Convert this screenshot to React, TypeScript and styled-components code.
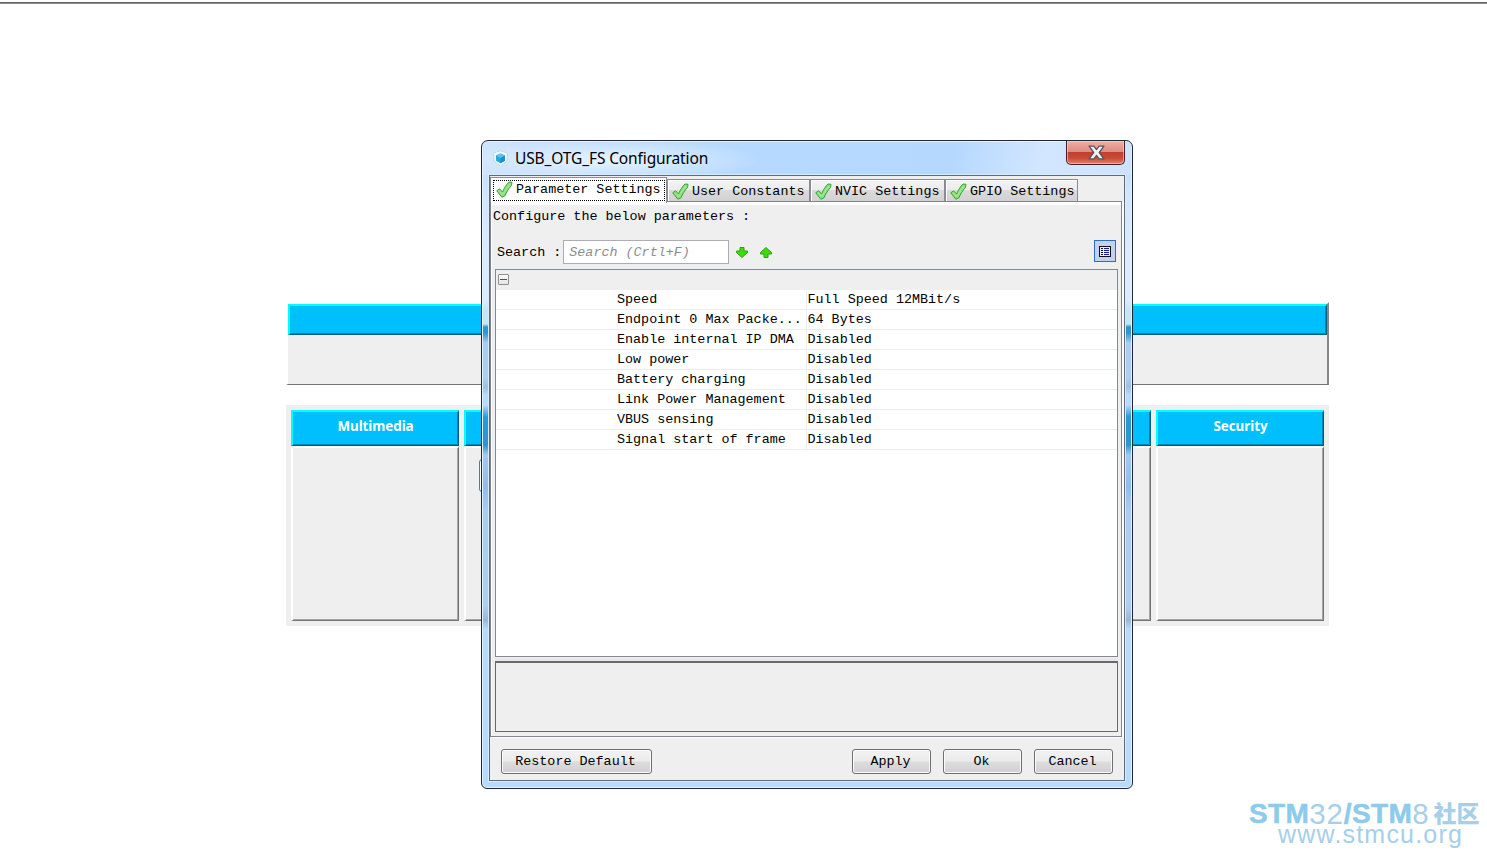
import React from "react";
import styled, { createGlobalStyle, css } from "styled-components";

const Global = createGlobalStyle`
  * { box-sizing: border-box; }
  html, body { margin: 0; padding: 0; background: #fff; }
  body { overflow: hidden; }
`;

const mono = css`
  font-family: "Liberation Mono", monospace;
  font-size: 13.4px;
  line-height: 20px;
  white-space: pre;
  color: #000;
`;

const Desktop = styled.div`
  position: relative;
  width: 1487px;
  height: 859px;
  padding-top: 2px;
  overflow: hidden;
  background: #fff;
`;

const TopRule = styled.div`
  height: 2px;
  background: #8b8b90;
  border-top: 1px solid #606066;
`;

const Middleware = styled.section`
  width: 1043px;
  height: 83px;
  margin: 298px 0 0 286px;
  border: solid;
  border-width: 2px 2px 1px 2px;
  border-color: #fff #858585 #747474 #fff;
  background: #efefef;
`;

const BlueBar = styled.div<{ $h: number }>`
  height: ${(p) => p.$h}px;
  background: #00bfff;
  border: solid;
  border-width: 2px 1px 1px 2px;
  border-color: #00ffff #005a7a #005a7a #00ffff;
  box-shadow: inset -1px -1px #0086b3;
  color: #fff;
  font: bold 13.4px/28px "Noto Sans", "Open Sans", sans-serif;
  letter-spacing: -0.05px;
  text-align: center;
`;

const Groups = styled.section`
  display: flex;
  gap: 5px;
  width: 1043px;
  height: 221px;
  margin: 20px 0 0 286px;
  padding: 5px;
  background: #efefef;
`;

const Group = styled.div`
  width: 168px;
`;

const GroupBody = styled.div`
  height: 175px;
  padding: 11px 0 0 13px;
  border: solid;
  border-width: 2px 1px 1px 2px;
  border-color: #fff #747474 #747474 #fff;
  box-shadow: inset -1px -1px #a6a6a6;
`;

const GroupButton = styled.div`
  width: 120px;
  height: 33px;
  border: 1px solid #3c7fb1;
  border-radius: 3px;
  box-shadow: inset 0 0 0 1px #fff;
`;

const Dialog = styled.div`
  position: absolute;
  left: 481px;
  top: 140px;
  width: 652px;
  height: 649px;
  padding: 0 7px 7px;
  border: 1px solid #1d2833;
  border-radius: 7px 7px 6px 6px;
  box-shadow: inset 0 0 0 1px #e6f3ff;
  background:
    linear-gradient(to bottom,
      #b9dbff 0, #b9dbff 20px, #d0e5fd 50px, #dcebff 110px, #dcebff 160px,
      #c3e6f4 168px, #c3e6f4 183px, #2898cf 186px, #2f97cd 192px,
      #a9cdf2 202px, #accff3 236px, #a0bfe2 246px, #b7daff 254px, #b7daff 264px,
      #259bd5 276px, #2c96cc 304px, #a5c9ee 314px, #90bce9 345px,
      #a9cdf2 370px, #accff3 465px, #9ab6d9 479px, #b7daff 488px, #b7daff 100%);
`;

const TitleBar = styled.header`
  display: flex;
  align-items: flex-start;
  height: 33px;
  margin: 1px -6px 0;
  padding: 0 6px 0 9px;
  border-radius: 5px 5px 0 0;
  background:
    radial-gradient(ellipse 150px 22px at 128px 18px, rgba(240,248,255,.85), rgba(240,248,255,0)),
    linear-gradient(100deg, #cfe4fd 0, #b8daff 20%, #b5d8ff 72%, #d2e6fe 86%, #cde3fd 100%);
`;

const AppIcon = styled.svg`
  margin-top: 8px;
  flex: none;
`;

const Title = styled.h1`
  flex: 1;
  margin: 5px 0 0 6px;
  font: 400 15.5px/22px "Noto Sans", "Open Sans", sans-serif;
  letter-spacing: -0.12px;
  white-space: nowrap;
`;

const CloseButton = styled.button`
  display: flex;
  justify-content: center;
  align-items: center;
  width: 59px;
  height: 24px;
  margin-top: -1px;
  padding: 0 0 0 1px;
  border: 1px solid #4b1d22;
  border-top: 0;
  border-radius: 0 0 5px 5px;
  box-shadow: inset 0 0 0 1px rgba(255,220,210,.55);
  background: linear-gradient(#eeb0a6 0, #dd8b80 48%, #c23f2d 50%, #c94b36 75%, #db8473 100%);
`;

const Client = styled.div`
  width: 636px;
  height: 606px;
  border: 1px solid #5d6b7b;
  box-shadow: 0 0 0 1px #d9ecff;
  background: #efefef;
`;

const TabStrip = styled.nav`
  display: flex;
  align-items: flex-end;
  height: 25px;
`;

const Tab = styled.div<{ $w: number; $active?: boolean }>`
  ${mono}
  display: flex;
  align-items: center;
  width: ${(p) => p.$w}px;
  height: 22px;
  padding: 1px 0 0 4px;
  border: 1px solid #8b8b94;
  border-bottom: 0;
  background: linear-gradient(#f3f3f3 0, #ececec 48%, #dadada 50%, #d2d2d2 100%);
  box-shadow: inset 1px 1px #fff;
  ${(p) =>
    p.$active &&
    css`
      position: relative;
      align-items: flex-start;
      height: 26px;
      margin-bottom: -2px;
      padding: 2px 0 0 2px;
      background: #fff;
    `}
`;

const Focus = styled.div`
  display: flex;
  align-items: center;
  width: 172px;
  height: 21px;
  padding: 0 0 2px 2px;
  border: 1px dotted #000;
`;

const TabLabel = styled.span`
  margin-left: 3px;
  padding-top: 1px;
`;

const Page = styled.main`
  width: 632px;
  height: 536px;
  padding: 5px 3px 0 4px;
  border: 1px solid #84848e;
  box-shadow: inset 0 3px #fff, inset 1px 0 #fff, 2px 1px #fff;
`;

const Hint = styled.div`
  ${mono}
  height: 30px;
  margin-left: -2px;
`;

const SearchRow = styled.div`
  ${mono}
  display: flex;
  align-items: center;
  height: 30px;
  padding: 0 2px;
`;

const SearchLabel = styled.span`
  padding-top: 1px;
`;

const SearchInput = styled.div`
  width: 166px;
  height: 24px;
  margin-left: 2px;
  padding-left: 5px;
  border: 1px solid #abadb3;
  background: #fff;
  color: #8d8d8d;
  font-style: italic;
  line-height: 24px;
`;

const Arrow = styled.svg`
  margin-left: 7px;
  & + & { margin-left: 12px; }
`;

const ViewToggle = styled.div`
  display: flex;
  align-items: center;
  justify-content: center;
  width: 22px;
  height: 22px;
  margin: -2px 0 0 auto;
  border: 1px solid #316ac5;
  background: #c1d2ee;
`;

const Table = styled.div`
  width: 623px;
  height: 388px;
  margin-top: 2px;
  border: 1px solid #828790;
  background: #fff;
`;

const GroupRow = styled.div`
  height: 20px;
  padding: 4px 0 0 2px;
  background: #efefef;
`;

const Collapse = styled.div`
  display: flex;
  align-items: center;
  width: 11px;
  height: 11px;
  padding: 0 1px;
  border: 1px solid #8f8f8f;
  border-radius: 1px;
  background: linear-gradient(#fff, #e4e4e4);
  &::before {
    content: "";
    width: 7px;
    height: 1px;
    background: #3b4f9a;
  }
`;

const Row = styled.div`
  ${mono}
  display: grid;
  grid-template-columns: 311px 1fr;
  height: 20px;
  line-height: 19px;
  border-bottom: 1px solid #ededed;
`;

const Name = styled.div`
  padding-left: 121px;
  border-right: 1px solid #ededed;
`;

const Value = styled.div`
  padding-left: 0.5px;
`;

const Description = styled.div`
  width: 623px;
  height: 71px;
  margin-top: 4px;
  border: 1px solid #696969;
  border-top-width: 2px;
  box-shadow: 0 -3px #e6e8ea;
`;

const Footer = styled.footer`
  display: flex;
  gap: 12px;
  padding: 12px 11px 0;
`;

const Button = styled.button<{ $w: number; $first?: boolean }>`
  ${mono}
  width: ${(p) => p.$w}px;
  height: 25px;
  margin-right: ${(p) => (p.$first ? "auto" : "0")};
  padding: 1px 2px 0 0;
  border: 1px solid #707070;
  border-radius: 3px;
  box-shadow: inset 0 0 0 1px #fafafa;
  background: linear-gradient(#f2f2f2 0, #ebebeb 49%, #dddddd 51%, #cfcfcf 100%);
`;

const Watermark = styled.div`
  position: absolute;
  left: 1249px;
  top: 799px;
  color: #a6cfea;
  font-family: "Liberation Sans", "Noto Sans CJK SC", sans-serif;
  white-space: nowrap;
`;

const Brand = styled.div`
  display: flex;
  height: 28px;
  font-size: 28px;
  line-height: 30px;
  b { color: #8ccbec; letter-spacing: 0.4px; -webkit-text-stroke: 0.5px #8ccbec; }
`;

const Digits = styled.span`
  font-size: 29.5px;
  letter-spacing: 0.8px;
`;

const Community = styled.span`
  margin-left: 4px;
  font: 900 23px/27px "Noto Sans CJK SC", sans-serif;
`;

const Site = styled.div`
  margin-left: 29px;
  font-size: 25px;
  line-height: 14px;
  letter-spacing: 1.2px;
`;

const Check = () => (
  <svg width="17" height="17" viewBox="0 0 17 17">
    <path d="M.8 9.8 L3.6 7.8 L6.5 11 C8.5 6.5 10.5 3.5 13 1 L16 1.3 L15.5 4.5 C13 7 10.5 11 8.8 15 L5.8 16.2 Z" fill="#8fe07f" stroke="#35a435" strokeWidth="1" strokeLinejoin="round" />
    <path d="M3 10 L6.5 13.5 L14 3" fill="none" stroke="#a8e89a" strokeWidth="1" />
  </svg>
);

const ArrowPath = () => (
  <path d="M4 .5 H8 V4 H11.5 V5.5 L6 10.5 L.5 5.5 V4 H4 Z" fill="#3fdc0c" stroke="#2aa30c" strokeLinejoin="round" />
);

const rows = [
  ["Speed", "Full Speed 12MBit/s"],
  ["Endpoint 0 Max Packe...", "64 Bytes"],
  ["Enable internal IP DMA", "Disabled"],
  ["Low power", "Disabled"],
  ["Battery charging", "Disabled"],
  ["Link Power Management", "Disabled"],
  ["VBUS sensing", "Disabled"],
  ["Signal start of frame", "Disabled"],
];

const tabs: [string, number][] = [
  ["User Constants", 143],
  ["NVIC Settings", 135],
  ["GPIO Settings", 133],
];

const groups = ["Multimedia", "", "", "", "", "Security"];

export default function App() {
  return (
    <Desktop>
      <Global />
      <TopRule />
      <Middleware>
        <BlueBar $h={31} />
      </Middleware>
      <Groups>
        {groups.map((name, i) => (
          <Group key={i}>
            <BlueBar $h={36}>{name}</BlueBar>
            <GroupBody>{i === 1 && <GroupButton />}</GroupBody>
          </Group>
        ))}
      </Groups>

      <Dialog>
        <TitleBar>
          <AppIcon width="17" height="17" viewBox="0 0 17 17">
            <path d="M8.5 .8 L15.5 3 L15 11 L8.5 16.3 L2 11 L1.5 3 Z" fill="#eef7fc" stroke="#a9cfe2" strokeWidth=".8" strokeDasharray="3 1" />
            <path d="M8.5 3.6 L13 5.6 V10.8 L8.5 13.3 L4 10.8 V5.6 Z" fill="#2fa5dc" />
            <path d="M4 5.6 L8.5 8 L13 5.6 L8.5 3.6 Z" fill="#5cc4ee" />
            <path d="M8.5 8 L13 5.6 V10.8 L8.5 13.3 Z" fill="#1e90cb" />
          </AppIcon>
          <Title>USB_OTG_FS Configuration</Title>
          <CloseButton aria-label="Close">
            <svg width="17" height="15" viewBox="0 0 16 14">
              <path d="M1 1 H5.5 L8 4.2 L10.5 1 H15 L10.6 7 L15 13 H10.5 L8 9.8 L5.5 13 H1 L5.4 7 Z" fill="#f3f3f3" stroke="#535666" strokeWidth="1.2" strokeLinejoin="round" />
            </svg>
          </CloseButton>
        </TitleBar>
        <Client>
          <TabStrip>
            <Tab $w={177} $active>
              <Focus>
                <Check />
                <TabLabel>Parameter Settings</TabLabel>
              </Focus>
            </Tab>
            {tabs.map(([label, w]) => (
              <Tab key={label} $w={w}>
                <Check />
                <TabLabel>{label}</TabLabel>
              </Tab>
            ))}
          </TabStrip>
          <Page>
            <Hint>Configure the below parameters :</Hint>
            <SearchRow>
              <SearchLabel>Search :</SearchLabel>
              <SearchInput>Search (Crtl+F)</SearchInput>
              <Arrow width="12" height="11" viewBox="0 0 12 11"><ArrowPath /></Arrow>
              <Arrow width="12" height="11" viewBox="0 0 12 11"><g transform="rotate(180 6 5.5)"><ArrowPath /></g></Arrow>
              <ViewToggle>
                <svg width="12" height="11" viewBox="0 0 12 11" shapeRendering="crispEdges">
                  <rect x=".5" y=".5" width="11" height="10" fill="#e8eefa" stroke="#111" />
                  <path d="M2 2.5h2M2 4.5h2M2 6.5h2M2 8.5h2" stroke="#111" />
                  <path d="M5 2.5h5M5 4.5h5M5 6.5h5M5 8.5h5" stroke="#1a1a9c" />
                </svg>
              </ViewToggle>
            </SearchRow>
            <Table>
              <GroupRow><Collapse /></GroupRow>
              {rows.map(([name, value]) => (
                <Row key={name}>
                  <Name>{name}</Name>
                  <Value>{value}</Value>
                </Row>
              ))}
            </Table>
            <Description />
          </Page>
          <Footer>
            <Button $w={151} $first>Restore Default</Button>
            <Button $w={79}>Apply</Button>
            <Button $w={79}>Ok</Button>
            <Button $w={79}>Cancel</Button>
          </Footer>
        </Client>
      </Dialog>

      <Watermark>
        <Brand>
          <b>STM</b><Digits>32</Digits><b>/STM</b><Digits>8</Digits>
          <Community>社区</Community>
        </Brand>
        <Site>www.stmcu.org</Site>
      </Watermark>
    </Desktop>
  );
}
